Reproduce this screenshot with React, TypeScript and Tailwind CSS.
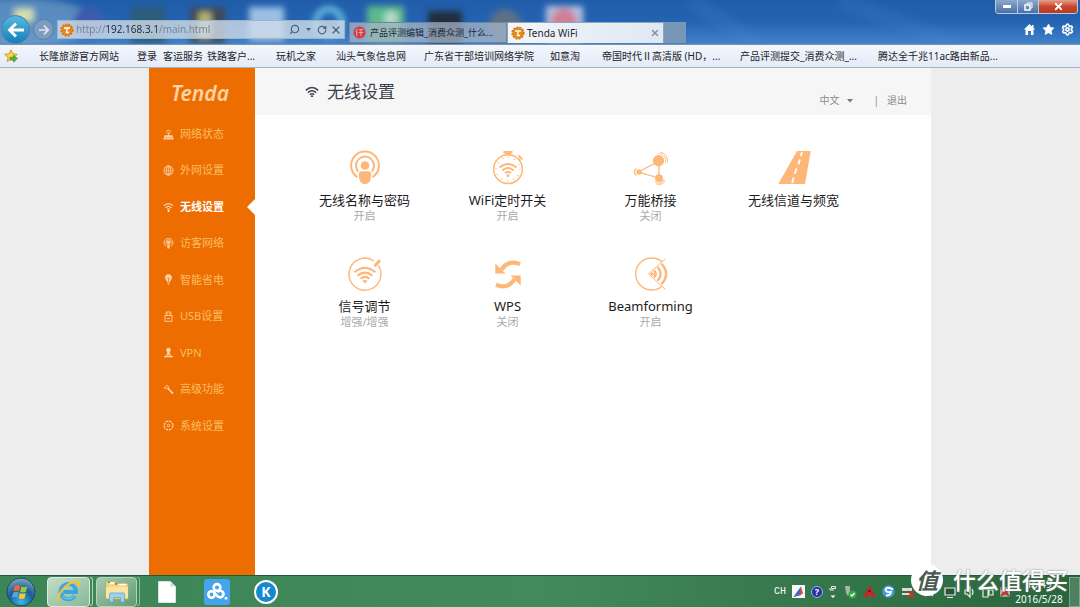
import React, { useState } from "react";

import { Search, Settings, Star, RotateCw, X } from "lucide-react";
import clsx from "clsx";

const bookmarks = [
  "长隆旅游官方网站",
  "登录",
  "客运服务",
  "铁路客户...",
  "玩机之家",
  "汕头气象信息网",
  "广东省干部培训网络学院",
  "如意淘",
  "帝国时代Ⅱ高清版 (HD，...",
  "产品评测提交_消费众测_...",
  "腾达全千兆11ac路由新品...",
];

const WifiShape = ({ className }: { className?: string }) => (
  <svg viewBox="0 0 24 20" fill="none" stroke="currentColor" className={className}>
    <path d="M1.5 7.5C7.5 1.2 16.5 1.2 22.5 7.5" strokeWidth="2.6" />
    <path d="M5 11.5C9 7.3 15 7.3 19 11.5" strokeWidth="2.6" />
    <path d="M8.4 15C10.6 12.8 13.4 12.8 15.6 15" strokeWidth="2.6" />
    <circle cx="12" cy="18" r="2" fill="currentColor" stroke="none" />
  </svg>
);

const menu = [
  {
    name: "网络状态",
    icon: (
      <>
        <path d="M2.6 3.2Q5.5 -0.6 8.400 3.2M4 4.600Q5.500 2.600 7 4.600" />
        <path d="M5.5 4v3" />
        <path d="M1.500 6.300h8l1.200 4.200H.3z" fill="currentColor" stroke="none" />
        <path d="M2 8.800h7" stroke="#ed6d00" strokeWidth="0.500" />
      </>
    ),
  },
  {
    name: "外网设置",
    icon: (
      <>
        <circle cx="5.5" cy="5.5" r="4.6" />
        <ellipse cx="5.5" cy="5.5" rx="2.1" ry="4.6" />
        <path d="M1 5.5h9M5.5 1v9M1.7 3h7.6M1.7 8h7.6" strokeWidth="0.6" />
      </>
    ),
  },
  {
    name: "无线设置",
    icon: (
      <>
        <path d="M0.8 3.6Q5.5 0 10.2 3.6M2.4 5.6Q5.5 3.1 8.6 5.6M4 7.4Q5.5 6.1 7 7.4" />
        <circle cx="5.5" cy="9" r="0.9" fill="currentColor" stroke="none" />
      </>
    ),
  },
  {
    name: "访客网络",
    icon: (
      <>
        <path d="M3 8.3a4.4 4.4 0 1 1 5 0M3.8 6.2a2.5 2.5 0 1 1 3.4 0" />
        <circle cx="5.5" cy="4.5" r="1.2" fill="currentColor" />
        <path d="M4 6.6h3l-.5 4h-2z" fill="currentColor" stroke="none" />
      </>
    ),
  },
  {
    name: "智能省电",
    icon: (
      <>
        <path d="M4.2 7.6C3.8 6 2.5 5.4 2.5 3.6a3 3 0 0 1 6 0C8.500 5.400 7.200 6 6.800 7.600z" fill="currentColor" />
        <path d="M4.500 3.500l1 1.200 1-1.200M5.500 4.500v3" stroke="#ed6d00" strokeWidth="0.8" />
        <path d="M4.300 9h2.400M4.800 10.300h1.400" />
      </>
    ),
  },
  {
    name: "USB设置",
    icon: (
      <>
        <rect x="2" y="4.500" width="7" height="5.800" />
        <path d="M3.200 4.500V1h4.600v3.500M4.600 2.200v1M6.400 2.200v1M4 7.500h3" />
      </>
    ),
  },
  {
    name: "VPN",
    icon: (
      <>
        <circle cx="5.500" cy="3" r="1.900" fill="currentColor" />
        <path d="M4.300 4.500h2.400l.500 3H3.800z" fill="currentColor" stroke="none" />
        <path d="M1 9.600h9M2.600 8h5.800" strokeWidth="1.200" />
      </>
    ),
  },
  {
    name: "高级功能",
    icon: (
      <>
        <path d="M1 4.200L4 1.200 5.800 3 3.200 4.800 2.200 4z" />
        <path d="M4.800 4.200L10 9.600" strokeWidth="1.700" />
      </>
    ),
  },
  {
    name: "系统设置",
    icon: (
      <>
        <circle cx="5.500" cy="5.500" r="4.400" strokeDasharray="2.700 0.750" strokeWidth="1.100" />
        <circle cx="5.500" cy="5.500" r="1.300" />
      </>
    ),
  },
];

const tiles = [
  {
    title: "无线名称与密码",
    status: "开启",
    icon: (
      <>
        <path d="M10.500 27.200a13.900 13.900 0 1 1 15 0" strokeWidth="2" />
        <path d="M11.300 21.600a9 9 0 1 1 13.400 0" strokeWidth="2" />
        <circle cx="18" cy="15.500" r="4.300" fill="currentColor" stroke="none" />
        <path d="M11.800 24.500Q11.800 21.200 15 21.200h6q3.200 0 3.200 3.300Q24 34.200 18 34.200t-6.200-9.700z" fill="currentColor" stroke="none" />
      </>
    ),
  },
  {
    title: "WiFi定时开关",
    status: "开启",
    icon: (
      <>
        <circle cx="18" cy="19.200" r="14.400" strokeWidth="1.500" />
        <circle cx="18" cy="19.200" r="11.900" strokeWidth="1.600" strokeDasharray="0.900 5.330" />
        <path d="M13.500 1h9v2.400h-2v2h-5v-2h-2z" fill="currentColor" stroke="none" />
        <path d="M28.500 5.500l4 3.800M30 8.800l-1.400 1.600" strokeWidth="1.800" />
        <path d="M9.500 17.500Q18 10.300 26.500 17.500M12.300 20.500Q18 15.700 23.700 20.500M14.900 23Q18 20.700 21.100 23" strokeWidth="1.900" />
        <circle cx="18" cy="25.600" r="1.500" fill="currentColor" stroke="none" />
      </>
    ),
  },
  {
    title: "万能桥接",
    status: "关闭",
    icon: (
      <>
        <path d="M26 11v17L5.500 22z" strokeWidth="1.300" />
        <circle cx="25.500" cy="10.700" r="5.600" fill="currentColor" stroke="none" />
        <circle cx="6" cy="22" r="2.700" fill="currentColor" stroke="none" />
        <circle cx="26" cy="28.200" r="3.900" fill="currentColor" stroke="none" />
        <path d="M25.500 3.500a7.300 7.300 0 0 1 7 9.300M27.500 2a9 9 0 0 1 7 10" strokeWidth="0.900" />
        <path d="M3.800 18.200a4.500 4.500 0 0 0 0 7.600M2.400 18.500a5.500 5.500 0 0 0 0 7" strokeWidth="0.900" />
        <path d="M31.200 29a5.500 5.500 0 0 1-9.500 2.500M32 31a7 7 0 0 1-8.500 3" strokeWidth="0.900" />
      </>
    ),
  },
  {
    title: "无线信道与频宽",
    status: "",
    icon: (
      <>
        <path d="M21 1h13.700L29 34H2.300z" fill="currentColor" stroke="none" />
        <path d="M25.900 2.300l-1 3.800M23.800 9.500l-1.300 4.700M20.500 18.500l-1.700 5.300M17.600 27.500l-1.400 5.500" stroke="#fff" strokeWidth="1.900" />
      </>
    ),
  },
  {
    title: "信号调节",
    status: "增强/增强",
    icon: (
      <>
        <path d="M31.300 9.300a16 16 0 1 1-4.500-4.500" strokeWidth="1.400" />
        <path d="M27.500 10.300L33 4.200" strokeWidth="3" />
        <path d="M7.500 16.300Q18 7.500 28.500 16.300M10.600 19.600Q18 13.500 25.400 19.600M13.500 22.700Q18 19 22.500 22.700" strokeWidth="2.100" />
        <path d="M15.300 24.800Q18 23 20.700 24.800L18 27.600z" fill="currentColor" stroke="none" />
      </>
    ),
  },
  {
    title: "WPS",
    status: "关闭",
    icon: (
      <>
        <path d="M30 8.200Q18.500 3.500 11.500 13.500" strokeWidth="4.200" />
        <path d="M5.300 7.500V17.500H15.500z" fill="currentColor" stroke="none" />
        <path d="M6 28.800Q17.500 33.500 24.500 23.500" strokeWidth="4.200" />
        <path d="M20.500 19.500H30.700V29.500z" fill="currentColor" stroke="none" />
      </>
    ),
  },
  {
    title: "Beamforming",
    status: "开启",
    icon: (
      <>
        <path d="M29 5.800a16 16 0 1 0 0 24.400" strokeWidth="1.400" />
        <path d="M32.500 2.800L15.500 17.800 32.500 33.500" strokeWidth="1" />
        <circle cx="19" cy="17.900" r="1.700" fill="currentColor" stroke="none" />
        <path d="M21 14.400q3.200 3.500 0 7M24.600 11q6 6.900 0 13.800M28.500 7.700q9.200 10.200 0 20.400" strokeWidth="2.400" />
      </>
    ),
  },
];

const TendaBadge = () => (
  <svg viewBox="0 0 14 14" className="size-[14px] shrink-0">
    <circle cx="7" cy="7" r="5.600" fill="#e98b1c" stroke="#d9780f" strokeWidth="2" strokeDasharray="2 1" />
    <path d="M4 5h6M7.300 5L6.500 9.500H9" stroke="#fff" strokeWidth="1.400" fill="none" />
  </svg>
);

const DesktopBackdrop = () => (
  <svg className="absolute inset-0 h-full w-full" aria-hidden="true">
    <defs>
      <filter id="soft">
        <feGaussianBlur stdDeviation="3" />
      </filter>
    </defs>
    <g filter="url(#soft)">
      <ellipse cx="20" cy="22" rx="75" ry="24" fill="#8fb6cf" opacity="0.500" />
      <rect x="14" y="8" width="20" height="14" fill="#d6dfb0" />
      <circle cx="88" cy="22" r="15" fill="#3c5cad" />
      <rect x="131" y="7" width="34" height="36" fill="#2b5c7c" />
      <rect x="190" y="7" width="35" height="36" fill="#3d4a58" />
      <rect x="199" y="12" width="12" height="26" fill="#b5b573" />
      <rect x="249" y="7" width="35" height="34" fill="#9bbfe4" />
      <circle cx="329" cy="22" r="13" fill="none" stroke="#68bce0" strokeWidth="6" />
      <rect x="367" y="6" width="37" height="36" fill="#5bb98c" />
      <circle cx="391" cy="18" r="7" fill="#b7dccb" />
      <rect x="428" y="11" width="34" height="32" fill="#202d3c" />
      <circle cx="505" cy="25" r="16" fill="#5f6f86" />
      <rect x="546" y="6" width="37" height="36" fill="#b5c3e2" />
      <circle cx="564" cy="21" r="13" fill="#cf7f96" />
    </g>
    <path d="M690 0L760 45M840 0L960 45" stroke="#4f8fd0" strokeWidth="18" opacity="0.150" filter="url(#soft)" />
  </svg>
);

const Browser = () => {
  const [url, setUrl] = useState("http://192.168.3.1/main.html");

  return (
    <header className="relative border-b border-[#8193a8] bg-linear-to-b from-[#205da9] via-[#2463b2] to-[#4182c8] pt-[15px]">
      <DesktopBackdrop />

      <div className="absolute top-0 right-[2px] flex h-[14px] overflow-hidden rounded-b border border-t-0 border-[#b8cbe2] text-white">
        <button aria-label="最小化" className="flex w-[22px] items-center justify-center border-r border-[#b8cbe2] bg-linear-to-b from-[#8ea9cc] to-[#4871a8]">
          <span className="h-[3px] w-2 bg-white" />
        </button>
        <button aria-label="还原" className="flex w-[21px] items-center justify-center border-r border-[#b8cbe2] bg-linear-to-b from-[#8ea9cc] to-[#4871a8]">
          <svg viewBox="0 0 9 9" className="size-[9px]" fill="none" stroke="#fff" strokeWidth="1.500">
            <path d="M3 2V1h5v5H7" strokeWidth="1" />
            <rect x="1" y="3" width="5" height="5" />
          </svg>
        </button>
        <button aria-label="关闭" className="flex w-[38px] items-center justify-center bg-linear-to-b from-[#e3a08d] via-[#c9442c] to-[#b93a25]">
          <X className="size-[11px]" strokeWidth={4} />
        </button>
      </div>

      <div className="relative flex items-center">
        <button aria-label="后退" className="ml-px flex size-[29px] items-center justify-center rounded-full border border-[#4f7ea9] bg-linear-to-b from-[#55b8dc] to-[#0c80bb]">
          <svg viewBox="0 0 18 18" className="size-[18px]" fill="none" stroke="#fff" strokeWidth="2.800">
            <path d="M17 9H3M9 2.500L2.500 9 9 15.500" />
          </svg>
        </button>
        <button aria-label="前进" className="ml-[3px] flex size-[21px] items-center justify-center rounded-full border border-[#5e7ea3] bg-[#7d9dbf]">
          <svg viewBox="0 0 14 14" className="size-3" fill="none" stroke="#dbe6f1" strokeWidth="2">
            <path d="M1 7h11M7 2l5 5-5 5" />
          </svg>
        </button>
        <div className="ml-[3px] flex h-[19px] w-[288px] items-center border border-[#9db4cb] bg-[#cfdce8]/80 pl-[2px] text-[#4d5f72]">
          <TendaBadge />
          <input
            aria-label="地址"
            value={url}
            onChange={(e) => setUrl(e.target.value)}
            className="ml-[2px] min-w-0 flex-1 bg-[linear-gradient(to_right,#6f7f8e_29px,#16202a_29px,#16202a_83px,#6f7f8e_83px)] bg-clip-text font-['Open_Sans',sans-serif] text-[10px] text-transparent outline-none"
          />
          <Search className="size-[11px] -scale-x-100" strokeWidth={2.5} />
          <svg viewBox="0 0 6 4" className="mx-[6px] w-[5px]">
            <path d="M0 0h6L3 3.500z" fill="currentColor" />
          </svg>
          <RotateCw className="size-[10px]" strokeWidth={3} />
          <X className="mr-[2px] ml-[3px] size-3" strokeWidth={2.5} />
        </div>

        <nav className="ml-1 flex flex-1 self-end pb-px text-[10px] text-[#1d2733]">
          <a href="#review" className="flex h-[21px] w-[158px] items-center gap-1 border border-[#6d86a3] bg-[#a5b4c6]/75 pl-[3px] whitespace-nowrap">
            <svg viewBox="0 0 14 14" className="size-[13px] shrink-0">
              <circle cx="7" cy="7" r="6.500" fill="#cf3d45" />
              <path d="M4 3v8M6 4h5M8.500 3v8M6 7h5M3 6l2 2" stroke="#f2b5b5" strokeWidth="0.900" />
            </svg>
            <span className="truncate text-[9px]">产品评测编辑_消费众测_什么...</span>
          </a>
          <a href="#tenda" className="flex h-[21px] w-[157px] items-center gap-[2px] border border-b-0 border-[#8da6c0] bg-linear-to-r from-[#f3f5f8] to-[#dfe8f3] pl-[3px]">
            <TendaBadge />
            <span>Tenda WiFi</span>
            <X className="mr-[3px] ml-auto size-[10px] text-[#8793a0]" strokeWidth={3.500} />
          </a>
          <button aria-label="新建选项卡" className="h-[21px] w-[22px] border border-[#7a97b7] bg-[#7796b8]" />
        </nav>

        <div className="mr-[6px] flex items-center gap-[6px] text-white">
          <button aria-label="主页">
            <svg viewBox="0 0 13 13" className="size-[13px]" fill="currentColor">
              <path d="M6.500 1L0.800 6.500h1.700V12h2.600V8h2.800v4h2.600V6.500h1.700L10.500 4.800V2H9v1.400z" />
            </svg>
          </button>
          <button aria-label="收藏夹">
            <Star className="size-[13px]" fill="currentColor" strokeWidth={1} />
          </button>
          <button aria-label="工具">
            <Settings className="size-[13px]" strokeWidth={3} />
          </button>
        </div>
      </div>
    </header>
  );
};

const Bookmarks = () => (
  <nav className="flex h-[23px] items-center border-b border-[#a9b3c0] bg-linear-to-b from-[#f3f7fd] to-[#e3ebf7] pl-1 text-[10px] text-[#1e2227]">
    <button aria-label="添加到收藏夹栏">
      <svg viewBox="0 0 14 14" className="size-[14px]">
        <path d="M7 .8l1.900 4 4.400.5-3.300 3 1 4.300L7 10.500l-3.900 2.100 1-4.300-3.400-3 4.400-.5z" fill="#fbd34c" stroke="#c99a22" strokeWidth="0.900" />
        <path d="M6 8.200h3.500V6L13.500 9.500 9.500 13v-2.200H6z" fill="#4fb53c" stroke="#33852a" strokeWidth="0.500" />
      </svg>
    </button>
    <ul className="ml-[21px] grid grid-cols-[98px_26px_44px_69px_60px_88px_126px_52px_138px_138px_auto] whitespace-nowrap">
      {bookmarks.map((name) => (
        <li key={name}>
          <a href="#bookmark">{name}</a>
        </li>
      ))}
    </ul>
  </nav>
);

const Sidebar = () => (
  <aside className="w-[106px] shrink-0 bg-[#ed6d00]">
    <h1 className="pt-3 pr-1 text-center text-[21px] leading-[26px] font-semibold text-[#fed3a5] italic">Tenda</h1>
    <ul className="mt-[10px] grid min-h-[328px] auto-rows-fr">
      {menu.map((item) => {
        const active = item.name === "无线设置";
        return (
          <li key={item.name} className="relative flex">
            <a
              href="#menu"
              className={clsx(
                "flex flex-1 items-center gap-[6px] pl-[14px] text-[11px]",
                active ? "font-bold text-white" : "text-[#fbbd62]"
              )}
            >
              <svg
                viewBox="0 0 11 11"
                fill="none"
                stroke="currentColor"
                strokeWidth="0.900"
                className={clsx("size-[11px]", active ? "text-white" : "text-[#fcd2a6]")}
              >
                {item.icon}
              </svg>
              <span>{item.name}</span>
            </a>
            {active && (
              <svg viewBox="0 0 8 16" className="absolute top-1/2 right-0 h-4 w-2 -translate-y-1/2">
                <path d="M8 0v16L0 8z" fill="#fff" />
              </svg>
            )}
          </li>
        );
      })}
    </ul>
  </aside>
);

const Content = () => (
  <main className="flex-1 bg-white">
    <div className="flex h-[47px] items-center bg-[#f6f6f6] pr-6 pl-[50px]">
      <WifiShape className="w-[14px] text-[#40454f]" />
      <h2 className="ml-2 text-[17px] text-[#3b3f4a]">无线设置</h2>
      <div className="ml-auto flex items-center pt-[18px] text-[10px] text-[#8b8b8b]">
        <div className="relative">
          <select aria-label="语言" className="w-[34px] appearance-none bg-transparent outline-none">
            <option>中文</option>
          </select>
          <svg viewBox="0 0 6 4" className="pointer-events-none absolute top-1/2 right-0 w-[6px] -translate-y-1/2">
            <path d="M0 0h6L3 3.500z" fill="#777" />
          </svg>
        </div>
        <span className="ml-5">|</span>
        <a href="#logout" className="ml-2">
          退出
        </a>
      </div>
    </div>

    <div className="grid max-w-[610px] grid-cols-4 gap-y-[34px] pt-[35px] pl-[38px]">
      {tiles.map((tile) => (
        <a key={tile.title} href="#tile" className="flex flex-col items-center">
          <svg viewBox="0 0 36 36" fill="none" stroke="currentColor" className="size-9 text-[#fdb777]">
            {tile.icon}
          </svg>
          <span className="mt-1 text-[13px] leading-5 text-[#1c1c1c]">{tile.title}</span>
          <span className="text-[11px] leading-3 text-[#aaa]">{tile.status}</span>
        </a>
      ))}
    </div>
  </main>
);

const Taskbar = () => (
  <footer className="relative flex h-8 items-center border-t border-[#1f5a3a] bg-linear-to-r from-[#3b8556] via-[#438a5b] to-[#28653c] text-white">
    <button aria-label="开始" className="ml-[6px]">
      <svg viewBox="0 0 30 30" className="size-[30px]">
        <defs>
          <radialGradient id="orb" cx="0.500" cy="0.850" r="0.900">
            <stop offset="0" stopColor="#3ab6e4" />
            <stop offset="0.500" stopColor="#1c5b94" />
            <stop offset="1" stopColor="#8db5c9" />
          </radialGradient>
        </defs>
        <circle cx="15" cy="15" r="14" fill="url(#orb)" stroke="#1c4a5f" />
        <path d="M8.500 9.200q3-1.600 5.700-.2l-1.200 5.200q-2.700-1.300-5.600.1z" fill="#ee6a2c" />
        <path d="M15.300 9.600q3 1.500 6 0l-1.300 5.200q-3 1.300-5.900 0z" fill="#98c93c" />
        <path d="M7.200 15.400q3-1.400 5.600 0l-1.300 5.200q-2.600-1.400-5.500 0z" fill="#4fa5e0" />
        <path d="M13.800 16q3 1.400 6 0l-1.300 5.200q-3 1.400-5.900 0z" fill="#fbc531" />
      </svg>
    </button>

    <button aria-label="Internet Explorer" className="ml-[11px] flex h-[30px] w-[43px] items-center justify-center rounded-sm border border-[#dceadf] bg-linear-to-br from-[#c3dcc9] to-[#86b898]">
      <svg viewBox="0 0 28 28" className="size-[27px]" fill="none">
        <path d="M20.500 18.500A8 8 0 1 1 21.800 14.500H8.500" stroke="#3ba6dd" strokeWidth="4" />
        <path d="M20 18.500A7.800 7.800 0 0 1 8 19" stroke="#71c8ef" strokeWidth="1.200" />
        <path d="M4.500 24.500C0 22 9 5 22 3.500c4-.5 3.500 3 2.200 5.500" stroke="#f3c433" strokeWidth="2.200" />
      </svg>
    </button>
    <span className="h-[29px] w-[3px] rounded-r-sm border border-l-0 border-[#b5d3bd]" />
    <button aria-label="资源管理器" className="ml-[3px] flex h-[30px] w-[41px] items-center justify-center rounded-sm border border-[#b5d3bd] bg-linear-to-br from-[#a6c9b0] to-[#5d9c74]">
      <svg viewBox="0 0 26 24" className="h-6 w-[26px]">
        <path d="M2 3q0-1.500 1.500-1.500h8l1 2H23q1 0 1 1V19H2z" fill="#f4d983" stroke="#caa64e" strokeWidth="0.700" />
        <path d="M4 3h6M15 4.500h7" stroke="#fff" strokeWidth="1.500" />
        <path d="M4 2.500h2" stroke="#3aa457" strokeWidth="1.500" />
        <path d="M11 4h2" stroke="#d84a36" strokeWidth="1.500" />
        <path d="M2 7h22v11H2z" fill="#f8e6a5" />
        <path d="M5.500 22v-8q0-1 1-1h13q1 0 1 1v8h-4v-4.500h-7V22z" fill="#9fd0ec" stroke="#5a9fc9" strokeWidth="0.700" />
      </svg>
    </button>
    <span className="h-[29px] w-[3px] rounded-r-sm border border-l-0 border-[#8dba9c]" />

    <button aria-label="文档" className="ml-[18px]">
      <svg viewBox="0 0 18 22" className="h-[22px] w-[18px]">
        <path d="M.5.5h12l5 5v16H.5z" fill="#fff" stroke="#dde3df" />
        <path d="M12.500.5v5h5z" fill="#d0d8d3" />
      </svg>
    </button>
    <button aria-label="云盘" className="ml-7 flex size-[26px] items-center justify-center rounded-[3px] bg-[#46a3ec]">
      <svg viewBox="0 0 24 24" className="size-6" fill="none" stroke="#fff" strokeWidth="2.600">
        <circle cx="12" cy="7.500" r="3.400" />
        <circle cx="6.500" cy="14.500" r="3.200" />
        <path d="M9 12.500l3.500 3.700q3 2.300 5.200 0 1.800-2.600-.5-4.700-2.700-1.800-4.700.8" />
        <path d="M21 17v2.500" />
      </svg>
    </button>
    <button aria-label="酷狗" className="ml-6 flex size-6 items-center justify-center rounded-full border-2 border-white bg-[#1489cf] text-[14px] leading-none font-bold">
      K
    </button>

    <div className="ml-auto flex items-center gap-[6px] text-[10px]">
      <span className="font-[Liberation_Mono,monospace] text-[10px]">CH</span>
      <svg viewBox="0 0 13 13" className="size-[13px]">
        <path d="M0 0h13v13H0z" fill="#f5f7fb" />
        <path d="M2 11L9 1.500 8 9z" fill="#2c66c4" />
        <path d="M9 1.500l2 7-4.500 2z" fill="#d94848" />
        <path d="M2 11.500l7-2" stroke="#3356a8" />
      </svg>
      <span className="flex size-3 items-center justify-center rounded-full border border-[#9fb2ea] bg-[#2333a0] text-[9px] font-bold">?</span>
      <svg viewBox="0 0 8 14" className="h-[14px] w-2" fill="none" stroke="#fff">
        <path d="M2.500 1.500h4v2h-4zM1 3v2h4" strokeWidth="0.900" />
        <path d="M1.500 10.500h5L4 13z" fill="#fff" stroke="none" />
      </svg>
      <svg viewBox="0 0 14 14" className="size-[14px]">
        <path d="M2 1h5v7l-2 3-2-3z" fill="#aab4ad" />
        <circle cx="9.500" cy="9.500" r="4" fill="#36a93d" />
        <path d="M7.500 9.500L9 11l2.500-3" stroke="#fff" strokeWidth="1.300" fill="none" />
      </svg>
      <svg viewBox="0 0 13 13" className="size-[13px]">
        <path d="M6.500.5L12.500 12H8.500L6.500 9 4.500 12H.5z" fill="#d31f24" />
        <path d="M6.500 4.500L7.800 7H5.200z" fill="#3a1313" />
      </svg>
      <svg viewBox="0 0 13 13" className="size-[13px]">
        <circle cx="6.500" cy="6.500" r="6.200" fill="#3f9ae0" />
        <path d="M11 4.500Q5 1 3.500 4.500q0 3 5.500 2.500-.5 3.500-5 3.500" stroke="#fff" strokeWidth="1.800" fill="none" />
      </svg>
      <svg viewBox="0 0 14 14" className="size-[14px]">
        <path d="M1 3h10v3H1zM1 8h8v2H1z" fill="#d9dedb" />
        <path d="M7 6l6 7M13 6l-6 7" stroke="#d52b2b" strokeWidth="1.800" />
      </svg>
      <svg viewBox="0 0 90 14" className="h-[14px] w-[90px]" fill="none" stroke="#e5ece7" strokeWidth="1.200">
        <path d="M4 4l8 7M12 4l-8 7" />
        <path d="M24 3h10v7H24zM26 12.500h6" fill="#28553a" />
        <path d="M44 5h2l3-3v10l-3-3h-2zM51 4q2 3 0 6" />
        <path d="M62 3h5v9h-5zM68 5h4v5h-4z" />
        <path d="M80 3h8v8h-8z" fill="#707a74" />
        <path d="M80 3l8 8M88 3l-8 8" stroke="#d52b2b" strokeWidth="1.800" />
      </svg>
      <div className="-ml-1 flex w-[52px] flex-col items-center text-[10px] leading-[15px]">
        <span>16:49</span>
        <span>2016/5/28</span>
      </div>
      <button aria-label="显示桌面" className="-ml-[2px] h-[30px] w-[11px] border border-[#7da78b] bg-[#4d8060]" />
    </div>

    {/* site watermark laid over the tray */}
    <div className="pointer-events-none absolute right-3 bottom-[11px] flex items-center gap-[10px] text-white">
      <span className="flex size-8 items-center justify-center rounded-full bg-white text-[22px] leading-none font-bold text-[#4a5a50] italic">
        值
      </span>
      <span className="text-[23px] leading-8 font-medium whitespace-nowrap text-shadow-[0_0_2px_#777]">什么值得买</span>
    </div>
  </footer>
);

const App = () => {
  return (
    <div className="flex min-h-screen flex-col bg-[#ededed] font-['Noto_Sans','Noto_Sans_CJK_SC',sans-serif]">
      <Browser />
      <Bookmarks />
      <div className="mx-auto flex w-full max-w-[782px] flex-1">
        <Sidebar />
        <Content />
      </div>
      <Taskbar />
    </div>
  );
};

export default App;
